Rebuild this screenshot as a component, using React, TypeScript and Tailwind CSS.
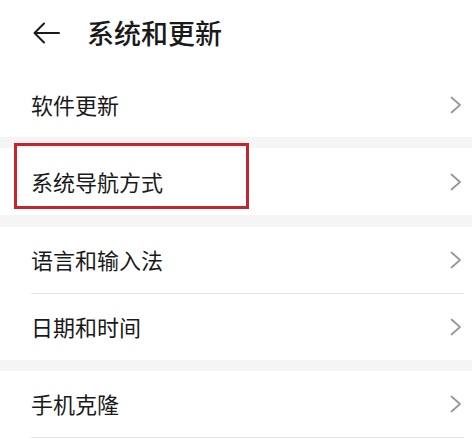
import React from "react";

const font = { fontFamily: '"Noto Sans CJK SC", "Noto Sans", sans-serif' };

function Chevron() {
  return (
    <svg width="12" height="18" viewBox="0 0 12 18" fill="none">
      <path d="M1.5 1.5 L10 9 L1.5 16.5" stroke="#969696" strokeWidth="1.7" strokeLinecap="round" strokeLinejoin="round" />
    </svg>
  );
}

function Row({ label, h }: { label: string; h: string }) {
  return (
    <div className={`flex items-center justify-between pl-[31px] pr-[10px] ${h}`}>
      <span className="pb-[2px] text-[22px] leading-none text-[#1a1a1a]">{label}</span>
      <Chevron />
    </div>
  );
}

export default function App() {
  return (
    <div className="w-[472px] h-[439px] bg-white overflow-hidden" style={font}>
      <div className="flex h-[72px] items-center pb-[6px] pl-[33px]">
        <svg width="27" height="22" viewBox="0 0 27 22" fill="none">
          <path d="M26 11 H2 M11 1.5 L1.5 11 L11 20.5" stroke="#1a1a1a" strokeWidth="2" strokeLinecap="round" strokeLinejoin="round" />
        </svg>
        <span className="ml-[27px] pb-[2px] text-[27px] font-medium leading-none text-[#1a1a1a]">系统和更新</span>
      </div>
      <Row label="软件更新" h="h-[65px]" />
      <div className="h-[11px] bg-[#f5f5f5]" />
      <div className="relative">
        <Row label="系统导航方式" h="h-[67px]" />
        <div className="absolute left-[14px] top-[-5px] h-[66px] w-[235px] border-[3px] border-[#c0272e]" />
      </div>
      <div className="h-[12px] bg-[#f5f5f5]" />
      <Row label="语言和输入法" h="h-[66px]" />
      <div className="ml-[31px] mr-[8px] h-px bg-[#e2e2e2]" />
      <Row label="日期和时间" h="h-[66px]" />
      <div className="h-[11px] bg-[#f5f5f5]" />
      <Row label="手机克隆" h="h-[66px]" />
      <div className="ml-[31px] mr-[8px] h-px bg-[#e2e2e2]" />
    </div>
  );
}
